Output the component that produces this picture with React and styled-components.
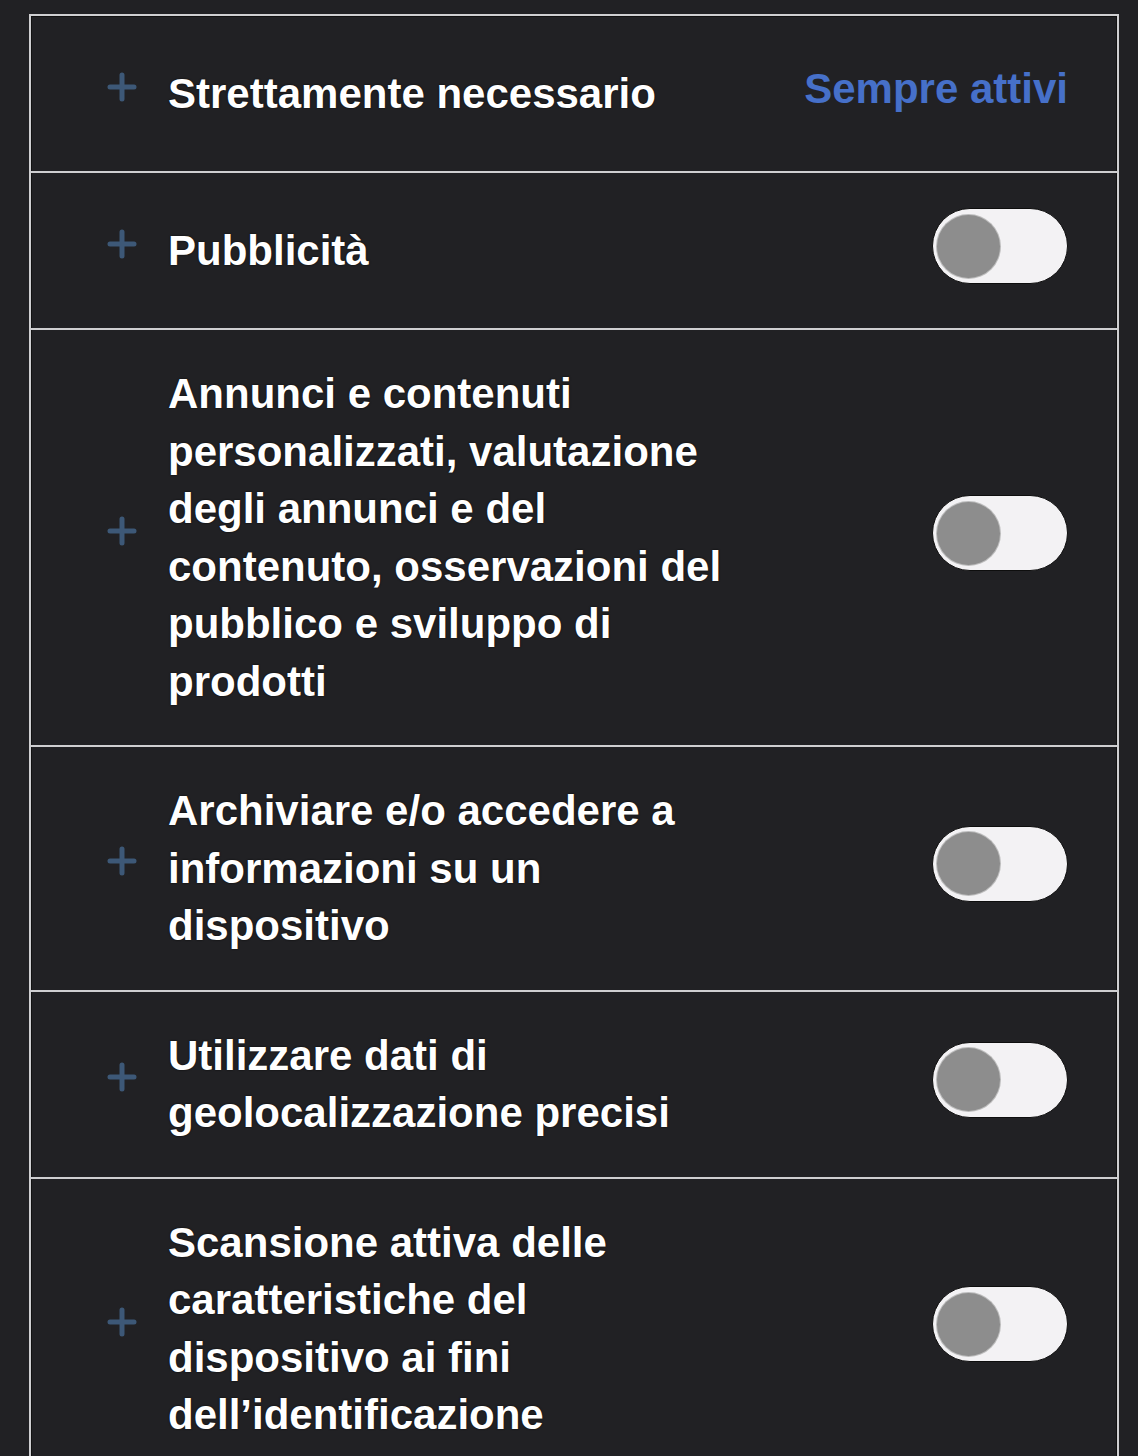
import styled, { createGlobalStyle } from "styled-components";

const GlobalStyle = createGlobalStyle`
  html, body {
    margin: 0;
    padding: 0;
    background: #212124;
  }
  body {
    font-family: "Liberation Sans", Arial, Helvetica, sans-serif;
  }
`;

const items = [
  { title: "Strettamente necessario", always: true },
  { title: "Pubblicità" },
  {
    title:
      "Annunci e contenuti personalizzati, valutazione degli annunci e del contenuto, osservazioni del pubblico e sviluppo di prodotti",
  },
  { title: "Archiviare e/o accedere a informazioni su un dispositivo" },
  { title: "Utilizzare dati di geolocalizzazione precisi" },
  {
    title:
      "Scansione attiva delle caratteristiche del dispositivo ai fini dell’identificazione",
  },
];

const PlusIcon = () => (
  <PlusBox>
    <svg width="30" height="30" viewBox="0 0 30 30">
      <path
        d="M15 3 V27 M3 15 H27"
        stroke="#3d5877"
        strokeWidth="5"
        strokeLinecap="round"
        fill="none"
      />
    </svg>
  </PlusBox>
);

const App = () => {
  return (
    <>
      <GlobalStyle />
      <Page>
        <List>
          {items.map((item) => (
            <Row key={item.title}>
              <PlusIcon />
              <Title>{item.title}</Title>
              {item.always ? (
                <Always>Sempre attivi</Always>
              ) : (
                <Toggle>
                  <Knob />
                </Toggle>
              )}
            </Row>
          ))}
        </List>
      </Page>
    </>
  );
};

const Page = styled.div`
  padding: 14px 19px 0 29px;
  height: 1456px;
  box-sizing: border-box;
  overflow: hidden;
`;

const List = styled.div`
  display: flex;
  flex-direction: column;
  border: 2px solid #cfcfd1;
  border-bottom: none;
  box-shadow: inset 0 0 0 1px #111;
`;

const Row = styled.div`
  display: flex;
  align-items: center;
  gap: 31px;
  min-height: 85px;
  padding: 35px 49px 35px 76px;
  border-top: 2px solid #cfcfd1;

  &:first-child {
    border-top: none;
  }
`;

const PlusBox = styled.div`
  width: 30px;
  height: 30px;
  flex-shrink: 0;
  margin-bottom: 14px;
  display: flex;
`;

const Title = styled.div`
  flex: 1;
  max-width: 580px;
  color: #ffffff;
  font-size: 42px;
  font-weight: 700;
  line-height: 57.5px;
  text-shadow: 0 0 2px rgba(0, 0, 0, 0.9);
`;

const Always = styled.div`
  margin-left: auto;
  color: #4670c9;
  font-size: 42px;
  font-weight: 700;
  line-height: 57.5px;
  margin-bottom: 10px;
`;

const Toggle = styled.div`
  margin-left: auto;
  width: 136px;
  height: 76px;
  box-sizing: border-box;
  border-radius: 38px;
  background: #f3f2f4;
  border: 1px solid #0e0e0e;
  flex-shrink: 0;
  display: flex;
  align-items: center;
  padding-left: 4px;
  margin-bottom: 9px;
`;

const Knob = styled.div`
  width: 63px;
  height: 63px;
  border-radius: 50%;
  background: #8d8d8d;
  box-shadow: 0 0 0 1px #bdbdbd;
`;

export default App;
